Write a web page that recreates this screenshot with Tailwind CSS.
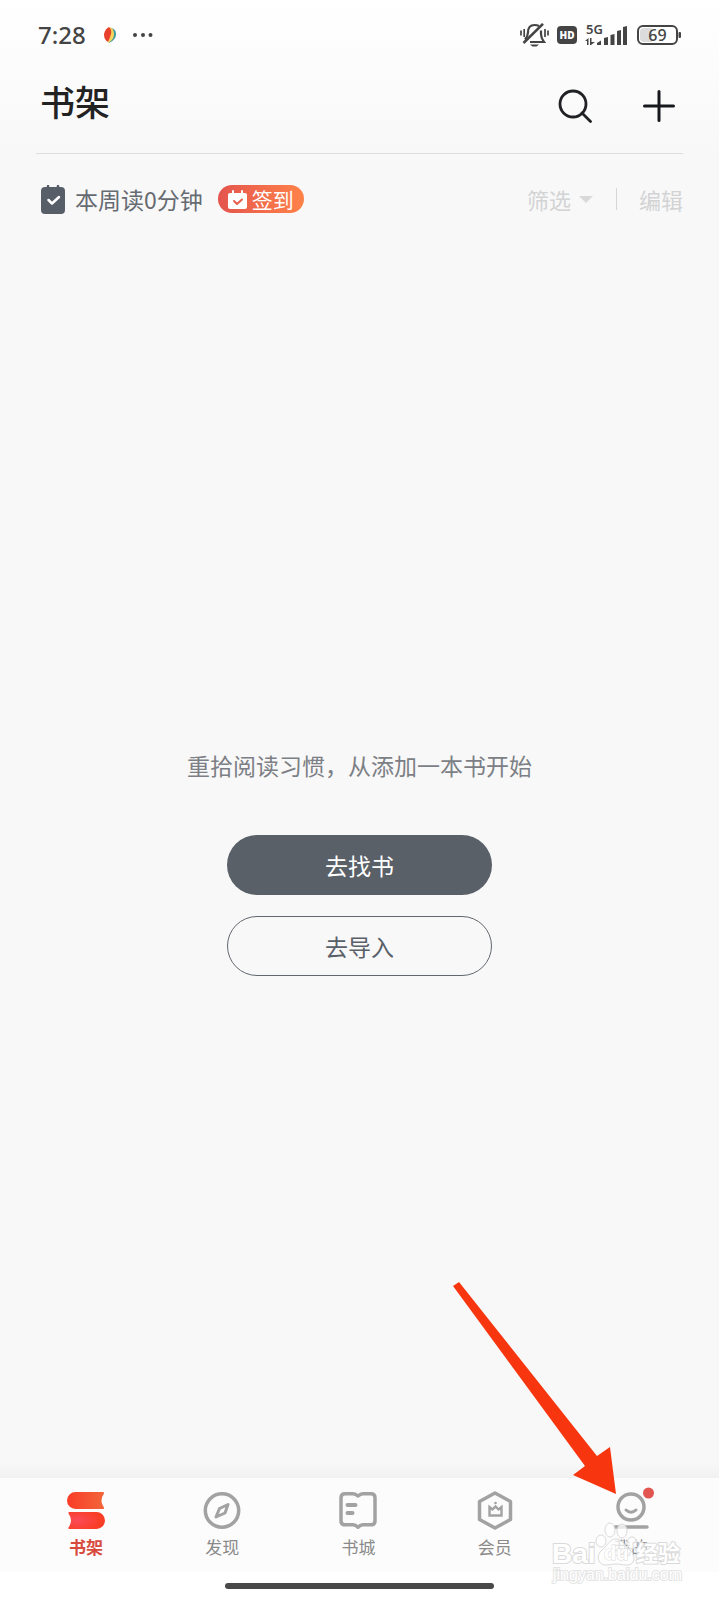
<!DOCTYPE html>
<html lang="zh-CN">
<head>
<meta charset="utf-8">
<meta name="viewport" content="width=device-width, initial-scale=1">
<title>书架</title>
<script src="https://cdn.jsdelivr.net/npm/@tailwindcss/browser@4"></script>
</head>
<body class="relative flex min-h-screen flex-col bg-[#f8f8f8] font-['Noto_Sans_CJK_SC',sans-serif]">
<div class="bg-linear-to-b from-white to-[#f8f8f8]">
  <!-- Status bar -->
  <div class="flex h-[70px] items-center justify-between pr-[38px] pl-[38px] text-[#444]">
    <div class="flex items-center">
      <span class="font-['Noto_Sans',sans-serif] text-[24px] font-medium leading-8">7:28</span>
      <svg class="ml-[18px] h-4 w-3" viewBox="0 0 12 16" aria-hidden="true">
        <path d="M7 1q5 1 5 6 0 6-7 9z" fill="#3f9aa0"/><path d="M5 0q5 1 5 7t-6 9z" fill="#f6d45a"/><path d="M5 0q3 3 2 7t-3 8Q0 13 0 7q1-5 5-7z" fill="#e8402c"/>
      </svg>
      <svg class="ml-[17px] h-1 w-5" viewBox="0 0 20 4" fill="#444" aria-hidden="true"><circle cx="2" cy="2" r="2"/><circle cx="10" cy="2" r="2"/><circle cx="17.500" cy="2" r="2"/></svg>
    </div>
    <div class="flex items-center">
      <svg class="h-6 w-[29px]" viewBox="0 0 29 24" fill="none" stroke="#444" stroke-width="2.200" aria-hidden="true">
        <path d="M3.500 20 23 .8" stroke-width="2.500"/><path d="M5 16.500Q8 13 8 9.500 8 2 14.500 2q2.500 0 4.500 1"/><path d="M21 7.500V11q0 4 3 8H10"/><path d="M10 21.500h9l-2.500 2h-4z" fill="#444" stroke="none"/><path d="M1 7.500v5M4.200 6v8M25 6v8M28 7.500v5" stroke-width="1.700"/>
      </svg>
      <svg class="ml-2 h-[18px] w-5" viewBox="0 0 20 18" aria-hidden="true"><rect width="20" height="18" rx="4" fill="#444"/><text x="10" y="13" text-anchor="middle" font-family="Open Sans, sans-serif" font-size="10" font-weight="800" fill="#fff">HD</text></svg>
      <svg class="ml-2 h-[21px] w-[42px] overflow-visible" viewBox="0 0 42 21" fill="#444" aria-hidden="true">
        <text x="1" y="9" font-family="Noto Sans, sans-serif" font-size="13" font-weight="600">5G</text>
        <path d="M0 16 3.500 13v7H2v-4zM5 13h1.500v4H10l-4 3H5z"/><path d="M12 20v-2l4-2.500V20z"/>
        <path d="M19 13l4-1v8h-4zM25.500 10l4-1v11h-4zM32 6l4-1v15h-4zM38 2l4-1v19h-4z"/>
      </svg>
      <svg class="ml-[10px] h-5 w-[44px]" viewBox="0 0 44 20" aria-hidden="true">
        <rect x="1" y="1" width="39" height="18" rx="5" fill="#fff" stroke="#444" stroke-width="2"/><path d="M7 3h8v14H7q-4 0-4-4V7q0-4 4-4z" fill="#dcdcdc"/><rect x="41.500" y="7" width="2.500" height="6" rx="1" fill="#444"/>
        <text x="20.500" y="15.500" text-anchor="middle" font-family="Noto Sans, sans-serif" font-size="16" font-weight="500" fill="#444">69</text>
      </svg>
    </div>
  </div>
  <!-- Title bar -->
  <header class="mx-9 flex h-[84px] items-start justify-between border-b border-[#dedede] pr-[8px] pl-1">
    <h1 class="pt-[7px] text-[35px] leading-[48px] font-medium text-[#222]">书架</h1>
    <div class="flex gap-[51px] pt-[19px]">
      <button type="button" aria-label="搜索"><svg class="size-[34px]" viewBox="0 0 34 34" fill="none" stroke="#202124" stroke-width="2.800" stroke-linecap="round"><circle cx="15" cy="15" r="13"/><path d="m24 24 8.500 8.500"/></svg></button>
      <button type="button" aria-label="添加"><svg class="size-8" viewBox="0 0 32 32" fill="none" stroke="#16181d" stroke-width="3" stroke-linecap="round"><path d="M16 1.500v29M1.500 16h29"/></svg></button>
    </div>
  </header>
</div>
<!-- Reading time and shelf tools -->
<section class="mx-9 flex h-[90px] items-center justify-between pl-[5px]">
  <div class="flex items-center">
    <svg class="h-[29px] w-6" viewBox="0 0 24 29" aria-hidden="true"><path d="M4 2h16q4 0 4 4v19q0 4-4 4H4q-4 0-4-4V6q0-4 4-4z" fill="#575e68"/><path d="M7 4V1M17 4V1" stroke="#575e68" stroke-width="2.500" stroke-linecap="round"/><path d="m7.500 15 3.500 3.500 7-6.500" fill="none" stroke="#fff" stroke-width="2.500" stroke-linecap="round" stroke-linejoin="round"/></svg>
    <span class="ml-[10px] text-[23px] leading-8 font-normal text-[#666b72]">本周读0分钟</span>
    <button type="button" class="ml-[15px] flex h-7 items-center gap-[5px] rounded-full bg-linear-to-r from-[#e4544d] to-[#ff8248] px-[10px] text-[21px] leading-7 text-white">
      <svg class="h-[19px] w-[19px]" viewBox="0 0 19 19" aria-hidden="true"><rect y="3" width="19" height="16" rx="2" fill="#fff"/><path d="M5 5V1M14 5V1" stroke="#fff" stroke-width="2" stroke-linecap="round"/><path d="m6 11 3 3 5-4.500" fill="none" stroke="#e8604d" stroke-width="2" stroke-linecap="round" stroke-linejoin="round"/></svg>
      签到
    </button>
  </div>
  <div class="flex items-center text-[22px] leading-8 text-[#d2d3d4]">
    <button type="button" class="flex items-center gap-2">筛选
      <svg class="h-[7px] w-[14px]" viewBox="0 0 14 7" aria-hidden="true"><path d="M0 0h14L7 7z" fill="#d9d9da"/></svg></button>
    <span class="ml-[23px] h-[22px] w-px bg-[#d5d6d7]"></span>
    <button type="button" class="ml-[22px]">编辑</button>
  </div>
</section>
<!-- Empty shelf -->
<main class="flex flex-1 flex-col items-center justify-center pt-4">
  <p class="text-[23px] leading-8 text-[#7c7f85]">重拾阅读习惯，从添加一本书开始</p>
  <button type="button" class="mt-[54px] h-[60px] w-[265px] rounded-full bg-[#596068] text-[23px] leading-8 text-white">去找书</button>
  <button type="button" class="mt-[21px] h-[60px] w-[265px] rounded-full border border-[#62676f] text-[23px] leading-8 text-[#596068]">去导入</button>
</main>
<!-- Tab bar -->
<div class="h-[14px] bg-linear-to-b from-[#f8f8f8] to-[#f1f1f1]"></div>
<nav class="bg-[#fcfcfc] pr-5 pl-[18px]">
  <div class="grid h-[94px] grid-cols-5 text-[17px] leading-6 text-[#8a8a8a]">
    <a href="#" class="flex flex-col items-center pt-[14px] font-bold text-[#d84a3e]" aria-current="page">
      <svg class="h-[37px] w-[38px]" viewBox="0 0 38 37" aria-hidden="true">
        <defs><linearGradient id="top" x1="0" y1="0" x2="1" y2="0"><stop stop-color="#f93c28"/><stop offset="1" stop-color="#f2663a"/></linearGradient><radialGradient id="low" cx=".25" cy=".5" r=".6"><stop stop-color="#fb4a5a"/><stop offset="1" stop-color="#f93e28"/></radialGradient></defs>
        <path d="M8.500 0H36q1.500 0 1 1.500-5 7 0 14 .500 1.500-1 1.500H8.500A8.500 8.500 0 0 1 8.500 0z" fill="url(#top)"/><path d="M29.500 37H2.500Q1 37 1.500 35.500q5-7 0-14Q1 20 2.500 20h27a8.500 8.500 0 0 1 0 17z" fill="url(#low)"/>
      </svg><span class="mt-[6px]">书架</span></a>
    <a href="#" class="flex flex-col items-center pt-[14px]">
      <svg class="h-[37px] w-[38px]" viewBox="0 0 38 37" fill="none" stroke="#a2a2a2" aria-hidden="true"><circle cx="19" cy="18.500" r="16.700" stroke-width="3.500"/><path d="m25 12.500-3 8.500-9 4 3.500-8.500z" stroke-width="3" stroke-linejoin="round"/></svg>
      <span class="mt-[6px]">发现</span></a>
    <a href="#" class="flex flex-col items-center pt-[14px]">
      <svg class="h-[37px] w-[38px]" viewBox="0 0 38 37" fill="none" stroke="#a2a2a2" stroke-linecap="round" stroke-linejoin="round" aria-hidden="true"><path d="M6 1.800h8q2.500 0 5 2.200 2.500-2.200 5-2.200h8q4 0 4 4v23q0 4-4 4h-8q-2.500 0-5 2.500-2.500-2.500-5-2.500H6q-4 0-4-4v-23q0-4 4-4z" stroke-width="3.500"/><path d="M8.500 13h8M8.500 21h5" stroke-width="4"/></svg>
      <span class="mt-[6px]">书城</span></a>
    <a href="#" class="flex flex-col items-center pt-[14px]">
      <svg class="h-[37px] w-[38px] overflow-visible" viewBox="0 0 38 37" fill="none" stroke="#a2a2a2" stroke-linejoin="round" aria-hidden="true"><path d="M19 1 34.500 9.500v18L19 36 3.500 27.500v-18z" stroke-width="3.500"/><path d="M13.500 15v8.500h12V15l-3 2.500-3-3-3 3z" stroke-width="2.400" stroke-linejoin="miter"/><circle cx="19.500" cy="11" r="1.300" fill="#a2a2a2" stroke="none"/></svg>
      <span class="mt-[6px]">会员</span></a>
    <a href="#" class="flex flex-col items-center pt-[14px]">
      <svg class="h-[37px] w-[38px] overflow-visible" viewBox="0 0 38 37" fill="none" stroke="#a2a2a2" stroke-linecap="round" aria-hidden="true"><circle cx="19" cy="15" r="13" stroke-width="3.500"/><path d="M14 18q5 4.500 10 0" stroke-width="3"/><path d="M3 35h32" stroke-width="3.500"/><circle cx="36.500" cy="1" r="5.500" fill="#e15651" stroke="none"/></svg>
      <span class="mt-[6px]">我的</span></a>
  </div>
</nav>
<div class="flex h-7 justify-center bg-white pt-[11px]"><span class="h-[6px] w-[269px] rounded-full bg-[#494949]"></span></div>
<!-- Pointer arrow -->
<svg class="pointer-events-none absolute right-[103px] bottom-[106px] h-[212px] w-[163px]" viewBox="0 0 163 212" aria-hidden="true"><path d="M0 4 6 0 144 174 157 165 163 212 120 193 132 184z" fill="#f73610"/></svg>
<!-- Watermark -->
<svg class="pointer-events-none absolute right-8 bottom-2 h-[76px] w-[136px]" viewBox="0 0 136 76" fill="#fff" stroke="#dadada" aria-hidden="true">
  <g fill-opacity=".75"><ellipse cx="50" cy="25" rx="5" ry="6"/><ellipse cx="59" cy="14" rx="5" ry="7"/><ellipse cx="71" cy="15" rx="5" ry="7"/><ellipse cx="81" cy="27" rx="5" ry="6"/><path d="M65 23c-7 0-9 8-15 12-5 5-3 14 5 14 5 0 6-1 10-1s6 1 11 1c8 0 9-9 4-14-6-4-8-12-15-12z"/></g>
  <g font-family="Liberation Sans, sans-serif" font-weight="700" paint-order="stroke" stroke-width="2">
    <text x="1" y="47" font-size="28">Bai</text><text x="53" y="44" font-size="20" stroke-width="1">du</text>
    <text x="85" y="45" font-size="22" font-family="Noto Sans CJK SC, sans-serif">经验</text>
    <text x="2" y="64" font-size="16" font-weight="400" stroke="#e4e4e4">jingyan.baidu.com</text>
  </g>
</svg>
</body>
</html>
